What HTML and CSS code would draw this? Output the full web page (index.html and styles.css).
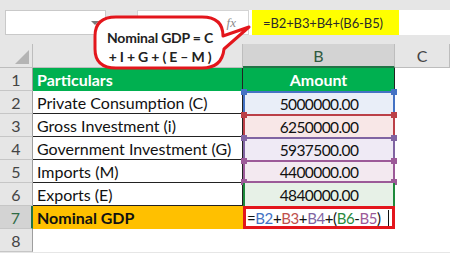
FILE: index.html
```html
<!DOCTYPE html>
<html>
<head>
<meta charset="utf-8">
<link rel="stylesheet" href="styles.css">
</head>
<body>
<div class="app">
  <div class="fbar">
    <div class="namebox"><span class="dd"></span></div>
    <div class="fxbox"><span class="fx">fx</span></div>
    <div class="finput"><span class="fhl">=B2+B3+B4+(B6-B5)</span></div>
  </div>
  <div class="sheet">
    <div class="corner"><span class="tri"></span></div>
    <div class="colh"></div>
    <div class="colh sel">B</div>
    <div class="colh">C</div>

    <div class="rh">1</div>
    <div class="cell head">Particulars</div>
    <div class="cell head hb">Amount</div>
    <div class="cell blank"></div>

    <div class="rh">2</div>
    <div class="cell ta">Private Consumption (C)</div>
    <div class="cell ref r-blue"><span class="h tl"></span><span class="h tr"></span>5000000.00</div>
    <div class="cell blank"></div>

    <div class="rh">3</div>
    <div class="cell ta">Gross Investment (i)</div>
    <div class="cell ref r-red"><span class="h tl"></span><span class="h tr"></span>6250000.00</div>
    <div class="cell blank"></div>

    <div class="rh">4</div>
    <div class="cell ta">Government Investment (G)</div>
    <div class="cell ref r-purple"><span class="h tl"></span><span class="h tr"></span>5937500.00</div>
    <div class="cell blank"></div>

    <div class="rh">5</div>
    <div class="cell ta">Imports (M)</div>
    <div class="cell ref r-mag"><span class="h tl"></span><span class="h tr"></span><span class="h bl"></span><span class="h br"></span>4400000.00</div>
    <div class="cell blank"></div>

    <div class="rh">6</div>
    <div class="cell ta">Exports (E)</div>
    <div class="cell ref r-green">4840000.00</div>
    <div class="cell blank"></div>

    <div class="rh active">7</div>
    <div class="cell total">Nominal GDP</div>
    <div class="cell edit">=<span class="c-blue">B2</span>+<span class="c-red">B3</span>+<span class="c-purple">B4</span>+(<span class="c-green">B6</span>-<span class="c-mag">B5</span>)<span class="caret"></span></div>
    <div class="cell blank"></div>

    <div class="rh">8</div>
    <div class="cell blank"></div>
    <div class="cell blank"></div>
    <div class="cell blank"></div>
  </div>

  <div class="callout">
    <svg class="bubble" width="170" height="64" viewBox="88 10 170 64">
      <path d="M 116 17 H 202 Q 223 17 223 36 L 249 27 L 224 49 Q 222 68 202 68 H 116 Q 95 68 95 49 V 36 Q 95 17 116 17 Z" fill="#fff" stroke="#e3161c" stroke-width="3" stroke-linejoin="round"/>
    </svg>
    <div class="ctext">Nominal GDP = C<br>+ I + G + ( E – M )</div>
  </div>
</div>
</body>
</html>
```

FILE: styles.css
```css
html, body {
  margin: 0;
  padding: 0;
}
body {
  width: 450px;
  height: 253px;
  overflow: hidden;
  background: #e6e6e6;
  font-family: Lato, "Open Sans", sans-serif;
}
.app {
  position: relative;
  width: 450px;
  height: 253px;
}

/* formula bar */
.fbar {
  display: flex;
  height: 44px;
  padding-top: 10px;
  box-sizing: border-box;
}
.namebox {
  margin-left: 5px;
  width: 101px;
  height: 25px;
  background: #fff;
  border: 1px solid #c9c9c9;
  box-sizing: border-box;
  display: flex;
  justify-content: flex-end;
  align-items: center;
  padding-right: 6px;
}
.dd {
  width: 0;
  height: 0;
  border-left: 4px solid transparent;
  border-right: 4px solid transparent;
  border-top: 4px solid #7a7a7a;
}
.fxbox {
  margin-left: 31px;
  width: 111px;
  height: 25px;
  background: #fff;
  border: 1px solid #d4d4d4;
  border-right: none;
  box-sizing: border-box;
  display: flex;
  justify-content: flex-end;
  align-items: center;
  padding-right: 12px;
}
.fx {
  font-family: "Liberation Serif", serif;
  font-style: italic;
  font-size: 13px;
  color: #8a8a8a;
}
.finput {
  flex: 1;
  height: 25px;
  background: #fff;
  border-left: 1px solid #d4d4d4;
  padding-left: 3px;
  display: flex;
}
.fhl {
  background: #ffff00;
  width: 147px;
  box-sizing: border-box;
  padding-left: 11px;
  display: flex;
  align-items: center;
  white-space: nowrap;
  font-size: 13px;
  letter-spacing: -0.1px;
  color: #2b2b2b;
}

/* sheet */
.sheet {
  display: grid;
  grid-template-columns: 33px 210px 152px 1fr;
  grid-template-rows: 24px repeat(8, 23px);
  background: #fff;
}
.corner {
  background: #e6e6e6;
  border-right: 1px solid #bdbdbd;
  border-bottom: 1px solid #bdbdbd;
  display: flex;
  justify-content: flex-end;
  align-items: flex-end;
  padding: 0 3px 3px 0;
}
.tri {
  width: 0;
  height: 0;
  border-left: 14px solid transparent;
  border-bottom: 14px solid #b4b4b4;
}
.colh {
  background: #e6e6e6;
  border-right: 1px solid #bdbdbd;
  border-bottom: 1px solid #bdbdbd;
  display: flex;
  justify-content: center;
  align-items: center;
  font-size: 16px;
  color: #444;
}
.colh.sel {
  background: #d3d3d3;
  color: #2f5a40;
  border-bottom: 2px solid #217346;
}
.rh {
  background: #e6e6e6;
  border-right: 1px solid #9e9e9e;
  border-bottom: 1px solid #c6c6c6;
  display: flex;
  justify-content: center;
  align-items: center;
  font-size: 16px;
  color: #444;
}
.rh.active {
  background: #d3d3d3;
  color: #2f6b45;
  border-right: 2px solid #217346;
}
.cell {
  font-size: 16px;
  color: #111;
  display: flex;
  align-items: center;
  white-space: nowrap;
  box-sizing: border-box;
}
.head {
  background: #00b050;
  color: #fff;
  font-weight: 700;
  padding-left: 4px;
  border-right: 1px solid #222;
}
.head.hb {
  justify-content: center;
  padding-left: 0;
  border-right: 1px solid #222;
}
.ta {
  padding-left: 4px;
  border-bottom: 1px solid #222;
  border-right: 1px solid #222;
  background: #fff;
}
.blank {
  background: #fff;
}
.total {
  background: #ffc000;
  font-weight: 700;
  padding-left: 4px;
  color: #111;
}

/* referenced cells */
.ref {
  position: relative;
  justify-content: center;
  border-style: solid;
  border-width: 2px 2px 0 2px;
  font-size: 15.5px;
  letter-spacing: -0.6px;
}
.r-blue { background: #e9eef8; border-color: #4472c4; }
.r-red { background: #f8e7e7; border-color: #bb4048; }
.r-purple { background: #efeaf5; border-color: #8064a2; }
.r-mag { background: #f3e9f0; border-color: #9c5a98; border-bottom-width: 2px; }
.r-green { background: #e7f1e7; border-color: #1e8a3c; border-top-width: 0; }
.h {
  position: absolute;
  width: 6px;
  height: 6px;
}
.r-blue .h { background: #4472c4; }
.r-red .h { background: #bb4048; }
.r-purple .h { background: #8064a2; }
.r-mag .h { background: #9c5a98; }
.h.tl { top: -4px; left: -4px; }
.h.tr { top: -4px; right: -4px; }
.h.bl { bottom: -4px; left: -4px; }
.h.br { bottom: -4px; right: -4px; }

.edit {
  border: 3px solid #e3161c;
  background: #fff;
  padding-left: 1px;
  font-size: 15px;
  letter-spacing: -0.4px;
  color: #111;
}
.c-blue { color: #4472c4; }
.c-red { color: #c0504d; }
.c-purple { color: #8064a2; }
.c-green { color: #2a8a3e; }
.c-mag { color: #9c5a98; }
.caret {
  display: inline-block;
  width: 1px;
  height: 16px;
  background: #111;
  margin-left: 7px;
}

/* callout */
.callout {
  position: absolute;
  left: 88px;
  top: 10px;
  width: 170px;
  height: 64px;
}
.bubble {
  display: block;
}
.ctext {
  position: absolute;
  left: 7px;
  top: 18px;
  width: 130px;
  text-align: center;
  font-size: 14px;
  line-height: 19px;
  letter-spacing: -0.2px;
  font-weight: 700;
  color: #222;
  white-space: nowrap;
}
```
